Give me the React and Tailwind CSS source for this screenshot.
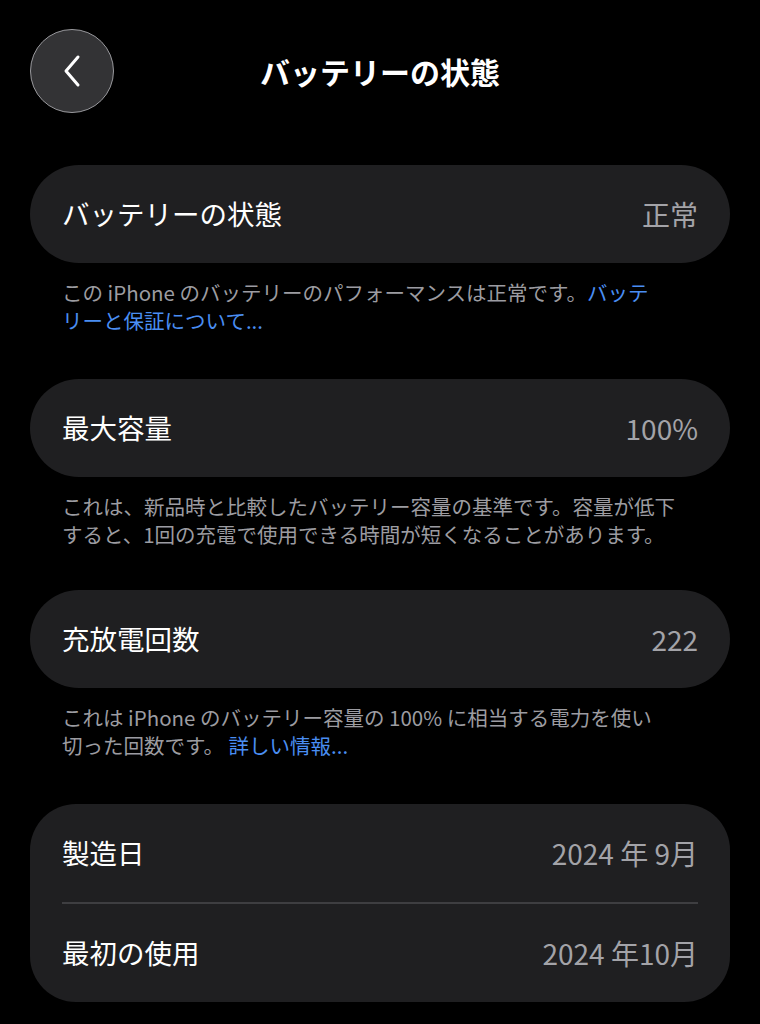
import React from 'react';

const rows = [
  {
    label: 'バッテリーの状態',
    value: '正常',
    note: (
      <>
        この iPhone のバッテリーのパフォーマンスは正常です。<span className="text-[#4a8ef2]">バッテ<br />リーと保証について...</span>
      </>
    ),
  },
  {
    label: '最大容量',
    value: '100%',
    note: (
      <>
        これは、新品時と比較したバッテリー容量の基準です。容量が低下<br />
        すると、1回の充電で使用できる時間が短くなることがあります。
      </>
    ),
  },
  {
    label: '充放電回数',
    value: '222',
    note: (
      <>
        これは iPhone のバッテリー容量の 100% に相当する電力を使い<br />
        切った回数です。 <span className="text-[#4a8ef2]">詳しい情報...</span>
      </>
    ),
  },
];

function Row({ label, value }) {
  return (
    <div className="flex h-[98px] items-center justify-between px-8">
      <span className="text-[27.5px] text-white">{label}</span>
      <span className="text-[28px] text-[#a3a3a8]">{value}</span>
    </div>
  );
}

function App() {
  return (
    <div
      className="min-h-screen bg-black px-[30px] pt-[29px]"
      style={{ fontFamily: '"Noto Sans CJK JP", "Noto Sans", sans-serif' }}
    >
      {/* ヘッダー */}
      <div className="grid grid-cols-[84px_1fr_84px] items-center">
        <button className="flex h-[84px] w-[84px] items-center justify-center rounded-full border-[1.5px] border-[#9a9a9e] bg-[#333335]">
          <svg width="22" height="34" viewBox="0 0 22 34" fill="none">
            <path d="M17 3 L5 17 L17 31" stroke="white" strokeWidth="3" strokeLinecap="round" strokeLinejoin="round" />
          </svg>
        </button>
        <h1 className="text-center text-[30px] font-bold text-white">バッテリーの状態</h1>
        <div />
      </div>

      <div className="mt-[52px]">
        {rows.map((r, i) => (
          <div key={i} className={i === 1 ? 'mb-[42px]' : 'mb-[45px]'}>
            <div className="rounded-full bg-[#1f1f21]">
              <Row label={r.label} value={r.value} />
            </div>
            <p className="mt-[15px] px-8 text-[20.5px] leading-[28px] text-[#9c9ca1]">{r.note}</p>
          </div>
        ))}

        <div className="rounded-[46px] bg-[#1f1f21]">
          <Row label="製造日" value="2024 年 9月" />
          <div className="mx-8 h-[2px] bg-[#3e3e41]" />
          <Row label="最初の使用" value="2024 年10月" />
        </div>
      </div>
    </div>
  );
}

export default App;
